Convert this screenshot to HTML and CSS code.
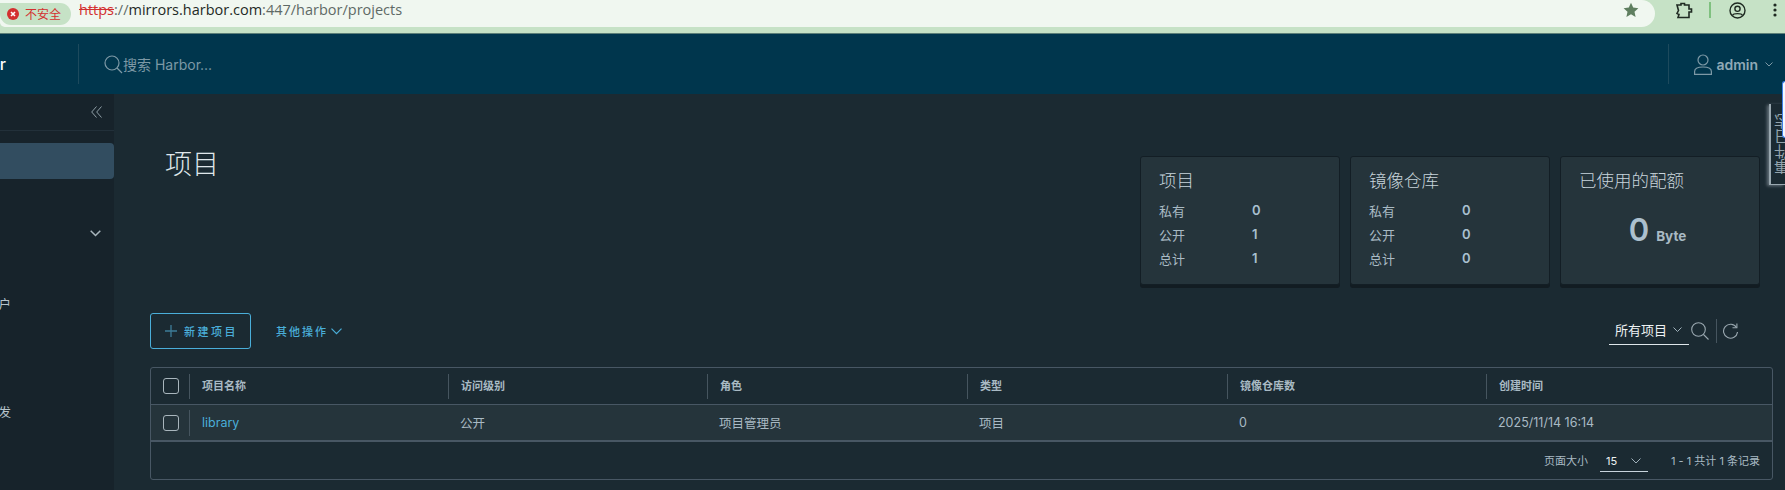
FILE: index.html
```html
<!DOCTYPE html>
<html lang="zh-CN">
<head>
    <meta charset="UTF-8">
    <title>Harbor</title>
    <link rel="stylesheet" href="styles.css">
</head>
<body>

<div class="chrome">
    <div class="urlbar">
        <div class="secure">
            <svg width="12" height="12" viewBox="0 0 12 12"><circle cx="6" cy="6" r="6" fill="#d3302f"/><path d="M4 4l4 4M8 4l-4 4" stroke="#fff" stroke-width="1.6"/></svg>
            <span>不安全</span>
        </div>
        <div class="url"><s>https</s>://<b>mirrors.harbor.com</b>:447/harbor/projects</div>
        <svg class="star" width="16" height="16" viewBox="0 0 16 16"><path d="M8 .8l2.2 4.8 5.2.6-3.9 3.5 1.1 5.2L8 12.2l-4.6 2.7 1.1-5.2L.6 6.2l5.2-.6z" fill="#5f7f60"/></svg>
    </div>
    <div class="chrome-icons">
        <svg width="18" height="17" viewBox="0 0 18 17" fill="none" stroke="#1f2a22" stroke-width="1.6"><path d="M2 3h4V1.500h3.500V3H14v4h2.500v3H14v5.500H3l1-3-2-1 1.500-3L2 3z"/></svg>
        <i class="chrome-sep"></i>
        <svg width="17" height="17" viewBox="0 0 17 17" fill="none" stroke="#1f2a22" stroke-width="1.4"><circle cx="8.500" cy="8.500" r="7.500"/><circle cx="8.500" cy="6.800" r="2.600"/><path d="M3.500 13.500c1-2.500 9-2.500 10 0"/></svg>
        <svg class="dots" width="4" height="14" viewBox="0 0 4 14" fill="#1f2a22"><circle cx="2" cy="2" r="1.600"/><circle cx="2" cy="7" r="1.600"/><circle cx="2" cy="12" r="1.600"/></svg>
    </div>
</div>

<header class="topbar">
    <div class="brand"><span>Harbor</span></div>
    <div class="search">
        <svg width="19" height="19" viewBox="0 0 19 19" fill="none" stroke="#7d99a6" stroke-width="1.200"><circle cx="8" cy="8" r="7"/><path d="M13 13l5 5"/></svg>
        <span>搜索 Harbor...</span>
    </div>
    <div class="user">
        <svg width="18" height="21" viewBox="0 0 18 21" fill="none" stroke="#7d99a6" stroke-width="1.200"><circle cx="9" cy="6" r="5"/><path d="M.6 20.400v-3c0-3 3-4.400 8.400-4.400s8.400 1.400 8.400 4.400v3z"/></svg>
        <span class="user-name">admin</span>
        <svg width="8" height="5" viewBox="0 0 8 5" fill="none" stroke="#7d99a6"><path d="M.5.500L4 4 7.500.500"/></svg>
    </div>
</header>

<div class="main">
    <nav class="sidebar">
        <div class="collapse">
            <svg width="11" height="12" viewBox="0 0 11 12" fill="none" stroke="#8f9ea6"><path d="M5.500.500L.7 6l4.800 5.500M10.500.500L5.700 6l4.800 5.500"/></svg>
        </div>
        <div class="nav-list">
            <div class="nav-item active"></div>
            <div class="nav-item"></div>
            <div class="nav-item group">
                <svg width="11" height="7" viewBox="0 0 11 7" fill="none" stroke="#a9b6bd" stroke-width="1.500"><path d="M.7.700l4.800 4.800L10.300.700"/></svg>
            </div>
            <div class="nav-item"></div>
            <div class="nav-item text"><span>用户</span></div>
            <div class="nav-item"></div>
            <div class="nav-item"></div>
            <div class="nav-item text"><span>分发</span></div>
        </div>
    </nav>

    <section class="content">
        <div class="page-head">
            <h1 class="page-title">项目</h1>
            <div class="cards">
                <div class="card">
                    <div class="card-title">项目</div>
                    <div class="stat"><span>私有</span><b>0</b></div>
                    <div class="stat"><span>公开</span><b>1</b></div>
                    <div class="stat"><span>总计</span><b>1</b></div>
                </div>
                <div class="card">
                    <div class="card-title">镜像仓库</div>
                    <div class="stat"><span>私有</span><b>0</b></div>
                    <div class="stat"><span>公开</span><b>0</b></div>
                    <div class="stat"><span>总计</span><b>0</b></div>
                </div>
                <div class="card">
                    <div class="card-title">已使用的配额</div>
                    <div class="quota"><b>0</b><span>Byte</span></div>
                </div>
            </div>
        </div>

        <div class="toolbar">
            <button class="btn-new">
                <svg width="12" height="12" viewBox="0 0 12 12" stroke="#3e7d99" stroke-width="1.300"><path d="M6 0v12M0 6h12"/></svg>
                <span>新建项目</span>
            </button>
            <div class="btn-more">
                <span>其他操作</span>
                <svg width="11" height="7" viewBox="0 0 11 7" fill="none" stroke="#4aaed9" stroke-width="1.200"><path d="M.5.700l5 5 5-5"/></svg>
            </div>
            <div class="filter">
                <span>所有项目</span>
                <svg width="9" height="6" viewBox="0 0 9 6" fill="none" stroke="#9fb0ba"><path d="M.5.500l4 4 4-4"/></svg>
            </div>
            <svg class="tool-search" width="18" height="18" viewBox="0 0 18 18" fill="none" stroke="#9aa8b0" stroke-width="1.100"><circle cx="7.500" cy="7.500" r="6.800"/><path d="M12.500 12.500l5 5"/></svg>
            <i class="tool-sep"></i>
            <svg width="15" height="16" viewBox="0 0 15 16" fill="none" stroke="#9aa8b0" stroke-width="1.100"><path d="M13.500 4.500A7 7 0 1 0 14.500 9"/><path d="M9.500 4.800h4.400V.500"/></svg>
        </div>

        <div class="grid-box">
            <div class="row head">
                <div class="check-cell"><i class="check"></i></div>
                <div class="cell">项目名称</div>
                <div class="cell">访问级别</div>
                <div class="cell">角色</div>
                <div class="cell">类型</div>
                <div class="cell">镜像仓库数</div>
                <div class="cell">创建时间</div>
            </div>
            <div class="row data">
                <div class="check-cell"><i class="check"></i></div>
                <div class="cell"><a class="link">library</a></div>
                <div class="cell">公开</div>
                <div class="cell">项目管理员</div>
                <div class="cell">项目</div>
                <div class="cell">0</div>
                <div class="cell">2025/11/14 16:14</div>
            </div>
            <div class="grid-foot">
                <span>页面大小</span>
                <div class="page-size">
                    <span>15</span>
                    <svg width="10" height="6" viewBox="0 0 10 6" fill="none" stroke="#9fb0ba"><path d="M.5.500l4.500 4.500L9.500.500"/></svg>
                </div>
                <span>1 - 1 共计 1 条记录</span>
            </div>
        </div>
    </section>
</div>

<div class="side-tab"></div>
<div class="event-tab"><span>事件日志</span></div>

</body>
</html>
```

FILE: styles.css
```css
* { box-sizing: border-box; }

html, body {
    margin: 0;
    padding: 0;
    height: 490px;
    overflow: hidden;
}

body {
    position: relative;
    display: flex;
    flex-direction: column;
    background: #1b2a32;
    color: #a9bac4;
    font-family: Inter, "Noto Sans CJK SC", sans-serif;
}

/* browser bar */
.chrome {
    display: flex;
    height: 34px;
    flex: none;
    background: #c6e2c6;
    border-bottom: 1px solid #5c7f78;
}
.urlbar {
    display: flex;
    align-items: center;
    width: 1655px;
    height: 27px;
    padding: 0 15px 7px 0;
    background: #f0f7f0;
    border-radius: 0 14px 14px 5px;
}
.secure {
    display: flex;
    align-items: center;
    gap: 6px;
    width: 71px;
    height: 22px;
    padding-left: 7px;
    margin-top: 7px;
    background: #c6e2c6;
    border-radius: 0 11px 11px 11px;
    color: #d3302f;
    font-size: 12px;
    font-family: "Noto Sans CJK SC", sans-serif;
}
.url {
    flex: 1;
    margin: -2px 0 0 8px;
    color: #5f6a66;
    font-size: 14.500px;
    font-family: "Open Sans", sans-serif;
    white-space: nowrap;
}
.url s { color: #d3302f; }
.url b { color: #1f2a26; font-weight: 400; }
.star { margin-right: 1px; }
.chrome-icons {
    flex: 1;
    display: flex;
    align-items: center;
    height: 20px;
    padding-left: 20px;
}
.chrome-sep {
    width: 2px;
    height: 16px;
    margin: 0 18px 0 16px;
    background: #7fc07f;
}
.dots { margin-left: 27px; }

/* harbor header */
.topbar {
    display: flex;
    align-items: center;
    height: 60px;
    flex: none;
    background: #00364d;
}
.brand {
    display: flex;
    justify-content: flex-end;
    align-items: center;
    width: 79px;
    height: 40px;
    padding-right: 72px;
    overflow: hidden;
    border-right: 1px solid #1d4a5d;
    color: #fff;
    font-size: 16px;
    font-weight: 500;
}
.search {
    display: flex;
    align-items: center;
    margin-left: 25px;
    color: #7d99a6;
    font-size: 14px;
}
.user {
    display: flex;
    align-items: center;
    height: 40px;
    margin-left: auto;
    padding: 0 12px 0 25px;
    border-left: 1px solid #1d4a5d;
    color: #8fa9b6;
}
.user-name {
    margin: 0 7px 0 4px;
    font-size: 14px;
    font-weight: 600;
}

/* sidebar + page */
.main {
    display: flex;
    flex: 1;
    min-height: 0;
}
.sidebar {
    width: 114px;
    flex: none;
    background: #17232b;
}
.collapse {
    display: flex;
    align-items: center;
    justify-content: flex-end;
    height: 37px;
    padding: 0 12px 1px 0;
    border-bottom: 1px solid #22303a;
}
.nav-list { margin-top: 12px; }
.nav-item {
    display: flex;
    align-items: center;
    height: 36px;
    overflow: hidden;
}
.nav-item.active {
    background: #324d60;
    border-radius: 0 4px 4px 0;
}
.nav-item.group {
    justify-content: flex-end;
    padding-right: 13px;
}
.nav-item.text {
    justify-content: flex-end;
    padding-right: 103px;
    color: #b8c4cb;
    font-size: 12.500px;
}
.nav-item.text span { flex: none; margin-top: -3px; }

.content {
    flex: 1;
    min-width: 0;
    padding: 62px 12px 0 36px;
}
.page-head {
    display: flex;
    justify-content: space-between;
    padding-right: 13px;
    height: 132px;
}
.page-title {
    margin: -11px 0 0 15px;
    color: #dfe6ea;
    font-size: 27px;
    font-weight: 300;
    line-height: 40px;
}
.cards {
    display: flex;
    gap: 10px;
}
.card {
    width: 200px;
    height: 129px;
    padding: 12px 18px;
    background: #25343b;
    border: 1px solid #131e25;
    border-radius: 3px;
    box-shadow: 0 3px 0 #121c22;
}
.card-title {
    margin-bottom: 5px;
    color: #c8d4dc;
    font-size: 17.500px;
    font-weight: 300;
    line-height: 24px;
}
.stat {
    display: flex;
    height: 24px;
    align-items: center;
    font-size: 13px;
}
.stat span { width: 93px; }
.stat b {
    color: #a9c0d0;
    font-weight: 600;
}
.quota {
    display: flex;
    align-items: baseline;
    justify-content: center;
    gap: 7px;
    margin-top: 17px;
    padding-right: 5px;
}
.quota b {
    color: #acc0ce;
    font-size: 31px;
    font-weight: 600;
    line-height: 40px;
}
.quota span {
    font-size: 13.500px;
    font-weight: 700;
}

/* toolbar */
.toolbar {
    display: flex;
    align-items: center;
    height: 36px;
    margin-top: 25px;
}
.btn-new {
    display: flex;
    align-items: center;
    gap: 7px;
    width: 101px;
    height: 36px;
    padding: 0 0 0 14px;
    background: transparent;
    border: 1px solid #4aaed9;
    border-radius: 3px;
    color: #4aaed9;
    font-family: inherit;
    font-size: 11px;
    font-weight: 500;
    letter-spacing: 2.500px;
}
.btn-more {
    display: flex;
    align-items: center;
    gap: 3px;
    margin-left: 25px;
    color: #4aaed9;
    font-size: 11px;
    font-weight: 500;
    letter-spacing: 2px;
}
.filter {
    display: flex;
    align-items: center;
    justify-content: space-between;
    width: 80px;
    height: 27px;
    margin-left: auto;
    padding: 0 7px 2px 6px;
    border-bottom: 1px solid #dfe6ea;
    color: #eef2f4;
    font-size: 13px;
}
.tool-search { margin: 0 7px 0 2px; }
.tool-sep {
    width: 1px;
    height: 24px;
    margin-right: 6px;
    background: #46555f;
}
.toolbar > svg:last-child { margin-right: 35px; }

/* datagrid */
.grid-box {
    height: 113px;
    margin-top: 18px;
    border: 1px solid #485764;
    border-radius: 3px;
}
.row {
    display: grid;
    grid-template-columns: 38px 259px 259px 260px 260px 259px 1fr;
    align-items: center;
    height: 37px;
    border-bottom: 1px solid #485764;
    font-size: 12.500px;
}
.row.data {
    height: 37px;
    background: #25343b;
    border-bottom-width: 2px;
}
.check-cell {
    display: flex;
    justify-content: flex-end;
    padding-right: 10px;
}
.check {
    width: 16px;
    height: 16px;
    border: 1px solid #a9b6bd;
    border-radius: 3px;
}
.cell { padding-left: 12px; }
.row.head { font-size: 11px; font-weight: 700; }
.row.head .cell {
    height: 25px;
    line-height: 25px;
    border-left: 1px solid #46555f;
}
.row.data .cell:nth-child(2) {
    height: 26px;
    line-height: 25px;
    border-left: 1px solid #46555f;
}
.link { color: #4aaed9; }
.grid-foot {
    display: flex;
    align-items: center;
    justify-content: flex-end;
    height: 36px;
    padding-right: 12px;
    font-size: 11px;
}
.page-size {
    display: flex;
    align-items: center;
    justify-content: space-between;
    width: 48px;
    height: 24px;
    margin: 0 23px 0 12px;
    padding: 2px 7px 0 6px;
    border-bottom: 1px solid #c8d4dc;
    color: #eef2f4;
}

/* overlays at the window edge */
.side-tab {
    position: absolute;
    top: 81px;
    right: 0;
    z-index: 2;
    width: 3px;
    height: 57px;
    background: #f4f8ff;
    border: 1px solid #3f7fe8;
    border-right: 0;
    border-radius: 3px 0 0 3px;
}
.event-tab {
    position: absolute;
    top: 104px;
    right: 0;
    width: 16px;
    height: 81px;
    padding: 10px 0 0 4px;
    overflow: hidden;
    background: #1b2a32;
    border-left: 2px solid #9aa8b0;
    border-bottom: 1px solid #9aa8b0;
    box-shadow: -2px 1px 3px rgba(190, 200, 210, 0.45);
    color: #94a4ad;
    font-size: 15px;
    line-height: 15px;
}
.event-tab span {
    display: block;
    width: 15px;
    writing-mode: vertical-rl;
    transform: rotate(180deg);
}
```
